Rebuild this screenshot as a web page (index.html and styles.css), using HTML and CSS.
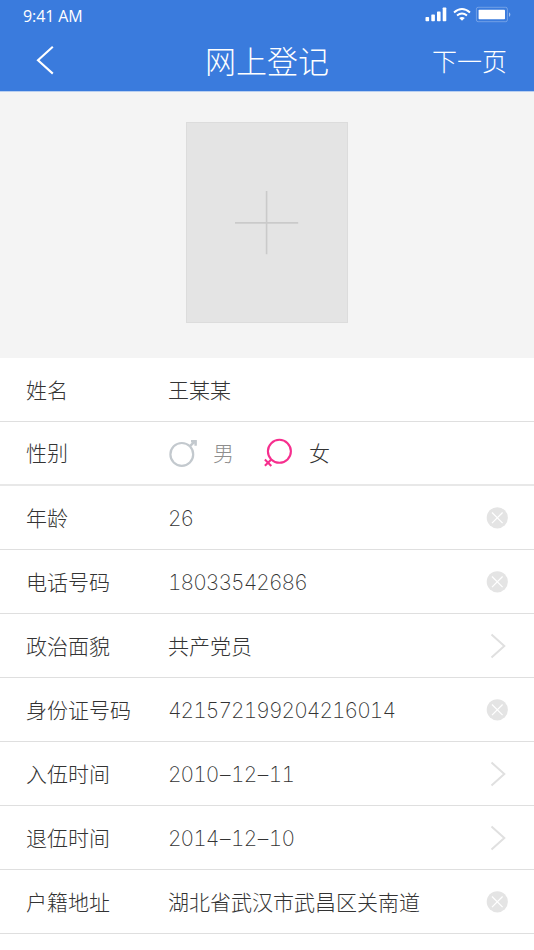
FILE: index.html
```html
<!DOCTYPE html>
<html lang="zh-CN">
<head>
<meta charset="utf-8">
<title>网上登记</title>
<link rel="stylesheet" href="styles.css">
</head>
<body>
<svg class="defs" width="0" height="0">
  <symbol id="clear" viewBox="0 0 22 22"><circle cx="11.3" cy="10.8" r="10.6" fill="#e4e4e4"/><path d="M6 5.5 16.6 16.1M16.6 5.5 6 16.1" stroke="#fff" stroke-width="1.2"/></symbol>
  <symbol id="next" viewBox="0 0 16 26"><path d="M1.5 1.5 14.3 13 1.5 24.5" fill="none" stroke="#e0e0e0" stroke-width="2"/></symbol>
</svg>
<header class="header">
  <div class="status">
    <span class="time">9:41 AM</span>
    <svg class="signals" width="88" height="20" viewBox="0 0 88 20" fill="#fff">
      <rect x=".5" y="12" width="3.6" height="4.2" rx=".7"/><rect x="6.3" y="9.4" width="3.6" height="6.8" rx=".7"/><rect x="12" y="6.4" width="3.6" height="9.8" rx=".7"/><rect x="17.7" y="2.6" width="3.6" height="13.6" rx=".7"/>
      <g fill="none" stroke="#fff" stroke-width="1.9"><path d="M29 7.5Q37 .5 45 7.5"/><path d="M32 10.6Q37 6.4 42 10.6"/></g>
      <path d="M34.2 13Q37 10.8 39.8 13L37 15.8Z"/>
      <rect x="51.4" y="2.3" width="31" height="14.4" rx="1.8" fill="none" stroke="#fff" stroke-opacity=".28"/>
      <rect x="53.6" y="4.8" width="26.4" height="9.4" rx=".8"/>
      <path d="M84 7.2Q86.8 9.5 84 12Z" fill-opacity=".5"/>
    </svg>
  </div>
  <nav class="nav">
    <svg class="back" width="20" height="30" viewBox="0 0 20 30"><path d="M17.8 .8 3 14.2 17.8 27.6" fill="none" stroke="#fff" stroke-width="2.1"/></svg>
    <h1 class="title">网上登记</h1>
    <span class="action">下一页</span>
  </nav>
</header>
<section class="photo">
  <div class="upload"><svg width="64" height="64" viewBox="0 0 64 64"><path d="M0 31.9H63.2M31.6 0V63.2" stroke="#cacaca" stroke-width="1.6"/></svg></div>
</section>
<main class="form">
  <div class="row"><span class="label">姓名</span><span class="value">王某某</span></div>
  <div class="row choice"><span class="label">性别</span>
    <div class="value gender">
      <svg class="male" width="30" height="30" viewBox="0 0 30 30" fill="none" stroke="#c3c9ce"><circle cx="13.8" cy="16.4" r="11.4" stroke-width="2.2"/><path d="M22 8.2 26 4.2" stroke-width="2.4"/><path d="M23 3.2H27.6V7.8" stroke-width="2.4"/><path d="M23.5 2.4H28.4V7.3Z" fill="#c3c9ce" stroke="none"/></svg>
      <span class="off">男</span>
      <svg class="female" width="30" height="30" viewBox="0 0 30 30" fill="none" stroke="#f62f8e" stroke-width="2.1"><circle cx="15.4" cy="13.3" r="11.5"/><path d="M7.3 21.5 .9 27.8M.9 21.6 7.3 27.9"/></svg>
      <span>女</span>
    </div>
  </div>
  <div class="row"><span class="label">年龄</span><span class="value number">26</span><svg class="clear"><use href="#clear"/></svg></div>
  <div class="row"><span class="label">电话号码</span><span class="value number">18033542686</span><svg class="clear"><use href="#clear"/></svg></div>
  <div class="row"><span class="label">政治面貌</span><span class="value">共产党员</span><svg class="next"><use href="#next"/></svg></div>
  <div class="row"><span class="label">身份证号码</span><span class="value number">421572199204216014</span><svg class="clear"><use href="#clear"/></svg></div>
  <div class="row"><span class="label">入伍时间</span><span class="value number">2010<i>–</i>12<i>–</i>11</span><svg class="next"><use href="#next"/></svg></div>
  <div class="row"><span class="label">退伍时间</span><span class="value number">2014<i>–</i>12<i>–</i>10</span><svg class="next"><use href="#next"/></svg></div>
  <div class="row"><span class="label">户籍地址</span><span class="value">湖北省武汉市武昌区关南道</span><svg class="clear"><use href="#clear"/></svg></div>
</main>
</body>
</html>
```
FILE: styles.css
```css
* { box-sizing: border-box; }
body {
  margin: 0;
  height: 950px;
  overflow: hidden;
  background: #fff;
  color: #333;
  font-family: "Noto Sans CJK SC", sans-serif;
  font-weight: 300;
}
.defs { display: block; }
.header {
  height: 92px;
  background: #3a7bdd;
  border-bottom: 1px solid #b9cff0;
  color: #fff;
}
.status {
  display: flex;
  justify-content: space-between;
  height: 30px;
  padding: 5px 21px 0 23px;
}
.time { font: 400 16px/22px "Open Sans", sans-serif; letter-spacing: -.1px; }
.nav {
  display: grid;
  grid-template-columns: 1fr auto 1fr;
  align-items: center;
  height: 61px;
  padding: 0 27px;
}
.back { margin-left: 8px; }
.title { margin: 0; padding-bottom: 2px; font-size: 31px; font-weight: 300; line-height: 40px; }
.action { justify-self: end; padding-bottom: 2px; font-size: 25px; line-height: 36px; }
.photo {
  display: flex;
  justify-content: center;
  height: 266px;
  padding-top: 30px;
  background: #f4f4f4;
}
.upload {
  display: flex;
  align-items: center;
  justify-content: center;
  width: 162px;
  height: 201px;
  background: #e4e4e4;
  border: 1px solid #dcdcdc;
}
.row {
  display: flex;
  align-items: center;
  height: 64px;
  padding: 0 26px;
  border-bottom: 1px solid #dfdfdf;
  font-size: 21px;
  line-height: 30px;
}
.choice { border-bottom: 2px solid #e8e8e8; }
.label { width: 142px; padding-bottom: 2px; }
.value { flex: 1; padding-bottom: 2px; }
.number {
  padding: 2px 0 0;
  font-family: Inter, "Liberation Sans", sans-serif;
  font-weight: 250;
  font-variant-numeric: tabular-nums;
  letter-spacing: -.95px;
}
.number i { padding: 0 1.5px; font-style: normal; }
.gender { display: flex; align-items: center; padding-bottom: 0; }
.gender span { padding-bottom: 2px; }
.off { color: #8e8e8e; }
.male { margin-right: 15px; }
.female { margin: 0 15px 0 30px; }
.clear { width: 22px; height: 22px; }
.next { width: 16px; height: 26px; margin-right: 2px; }
```
